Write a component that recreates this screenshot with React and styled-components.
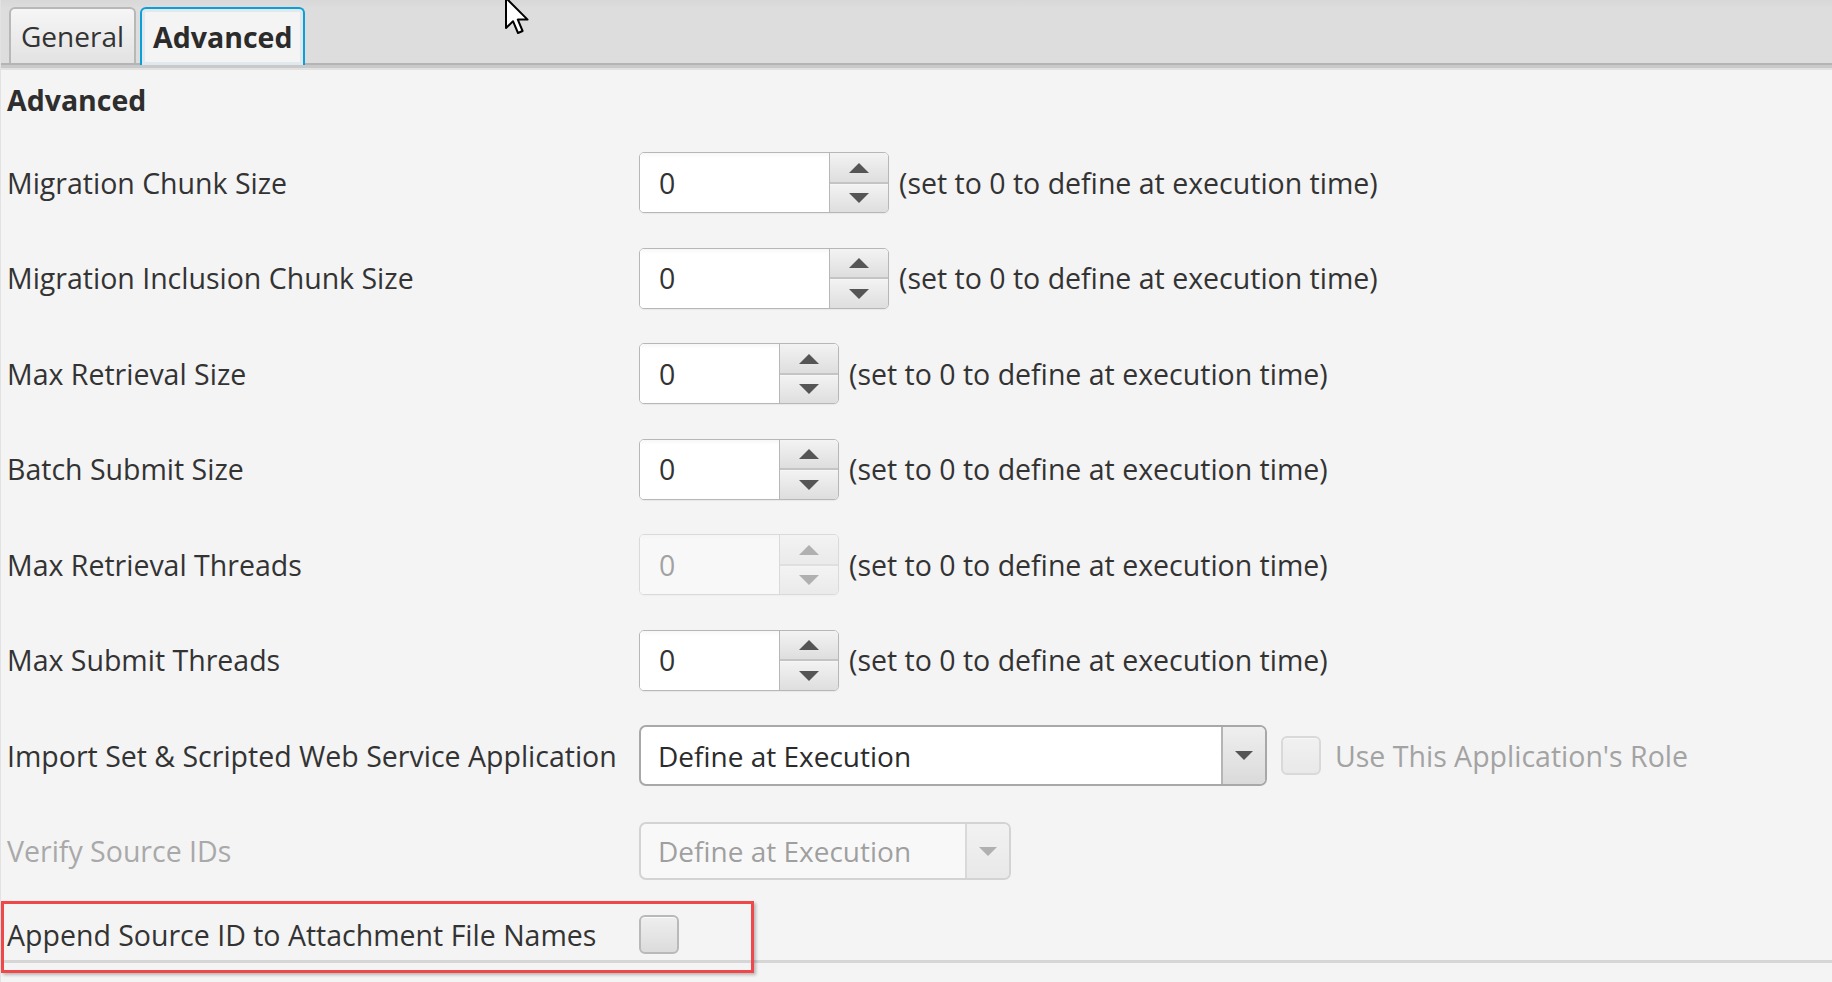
import styled, { createGlobalStyle, css } from "styled-components";

const GlobalStyle = createGlobalStyle`
  html, body {
    margin: 0;
    padding: 0;
    background: #f4f4f4;
  }
  body {
    font-family: "Open Sans", "Noto Sans", sans-serif;
    color: #333333;
    overflow: hidden;
  }
`;

const FONT = "28.5px";

const Window = styled.div`
  position: relative;
  width: 1832px;
  height: 982px;
  background: #f4f4f4;
  border-left: 1px solid #e2e2e2;
  box-sizing: border-box;
`;

const TabBar = styled.div`
  height: 65px;
  display: flex;
  align-items: flex-end;
  gap: 4px;
  padding-left: 8px;
  background: linear-gradient(#d8d8d8, #dddddd 8px);
  border-bottom: 2px solid #b4b4b4;
  box-shadow: 0 3px 0 #c9c9c9, 0 5px 0 #e2e2e2;
  box-sizing: border-box;
`;

const Tab = styled.div`
  box-sizing: border-box;
  height: ${(p) => (p.$selected ? "58px" : "56px")};
  margin-bottom: ${(p) => (p.$selected ? "-2px" : "0")};
  padding: 0 ${(p) => (p.$selected ? "11px" : "10px")};
  display: flex;
  align-items: center;
  font-size: ${(p) => (p.$selected ? FONT : "28px")};
  border-radius: 6px 6px 0 0;
  position: relative;
  z-index: 1;
  ${(p) =>
    p.$selected
      ? css`
          font-weight: 700;
          color: #2b2b2b;
          background: #f4f4f4;
          border: 2px solid #0a9fd6;
          border-bottom: none;
          box-shadow: inset 0 0 0 3px #dfe9ee;
        `
      : css`
          color: #333;
          background: linear-gradient(#f6f6f6, #e2e2e2);
          border: 2px solid #b8b8b8;
          border-bottom: none;
        `}
`;

const Pane = styled.div`
  padding-top: 4px;
`;

const Heading = styled.h3`
  margin: 0;
  padding-left: 6px;
  height: 66px;
  line-height: 62px;
  font-size: ${FONT};
  font-weight: 700;
  color: #2e2e2e;
`;

const Row = styled.div`
  position: relative;
  display: flex;
  align-items: center;
  height: 95.5px;
  padding-left: 6px;
  box-sizing: border-box;
`;

const LastRow = styled(Row)`
  height: 64px;
  padding-top: 10px;
  border-bottom: 3px solid #d6d6d6;

  &::after {
    content: "";
    position: absolute;
    left: 0;
    top: 2px;
    width: 753px;
    height: 72px;
    box-sizing: border-box;
    border: 3px solid #f0474a;
    box-shadow: 2px 2px 3px rgba(0, 0, 0, 0.25);
    pointer-events: none;
  }
`;

const Label = styled.span`
  width: 632px;
  flex: none;
  font-size: ${FONT};
  color: ${(p) => (p.$disabled ? "#a9a9a9" : "#333333")};
  white-space: nowrap;
`;

const Hint = styled.span`
  margin-left: 10px;
  font-size: ${FONT};
  color: #333333;
  white-space: nowrap;
`;

const SpinnerBox = styled.div`
  display: flex;
  height: 61px;
  border: 1px solid #b7b7b7;
  border-radius: 5px;
  overflow: hidden;
  box-sizing: border-box;
  background: #fff;
  box-shadow: 0 1px 1px rgba(0, 0, 0, 0.05);
  opacity: ${(p) => (p.$disabled ? 0.42 : 1)};
`;

const SpinnerField = styled.div`
  width: ${(p) => (p.$wide ? "189px" : "139px")};
  padding-left: 19px;
  box-sizing: border-box;
  display: flex;
  align-items: center;
  font-size: ${FONT};
  color: #333;
  background: linear-gradient(#f7f7f7, #ffffff 5px);
`;

const SpinnerButtons = styled.div`
  width: 58px;
  display: flex;
  flex-direction: column;
  border-left: 1px solid #b7b7b7;
`;

const StepButton = styled.div`
  flex: 1;
  display: flex;
  align-items: center;
  justify-content: center;
  background: linear-gradient(#f3f3f3, #dedede);
  & + & {
    border-top: 2px solid #c4c4c4;
    box-shadow: inset 0 1px 0 #f6f6f6;
  }
`;

const Arrow = styled.span`
  width: 0;
  height: 0;
  border-left: ${(p) => p.$size / 2}px solid transparent;
  border-right: ${(p) => p.$size / 2}px solid transparent;
  ${(p) =>
    p.$up
      ? `border-bottom: ${Math.round(p.$size / 2)}px solid #555;`
      : `border-top: ${Math.round(p.$size / 2)}px solid #555;`}
`;

const ComboBox = styled.div`
  display: flex;
  height: ${(p) => (p.$disabled ? "58px" : "61px")};
  width: ${(p) => p.$width}px;
  border: 2px solid #a8a8a8;
  border-radius: 7px;
  overflow: hidden;
  box-sizing: border-box;
  background: #fff;
  opacity: ${(p) => (p.$disabled ? 0.42 : 1)};
`;

const ComboValue = styled.div`
  flex: 1;
  display: flex;
  align-items: center;
  padding-left: 17px;
  font-size: 28px;
  color: #2b2b2b;
  white-space: nowrap;
`;

const ComboButton = styled.div`
  width: 42px;
  display: flex;
  align-items: center;
  justify-content: center;
  border-left: 2px solid #b5b5b5;
  background: linear-gradient(#efefef, #dadada);
`;

const Check = styled.div`
  width: 40px;
  height: 39px;
  flex: none;
  box-sizing: border-box;
  border: 2px solid #b9b9b9;
  border-radius: 6px;
  background: linear-gradient(#eeeeee, #dcdcdc);
  box-shadow: inset 0 1px 0 #fafafa;
  opacity: ${(p) => (p.$disabled ? 0.45 : 1)};
`;

const CheckLabel = styled.label`
  display: flex;
  align-items: center;
  gap: 14px;
  margin-left: 14px;
  font-size: ${FONT};
  color: ${(p) => (p.$disabled ? "#a3a3a3" : "#333")};
  white-space: nowrap;
`;

const Cursor = styled.svg`
  position: absolute;
  left: 503px;
  top: -4px;
  pointer-events: none;
`;

const HINT = "(set to 0 to define at execution time)";

const Spinner = ({ wide, disabled }) => (
  <SpinnerBox $disabled={disabled}>
    <SpinnerField $wide={wide}>0</SpinnerField>
    <SpinnerButtons>
      <StepButton>
        <Arrow $up $size={20} />
      </StepButton>
      <StepButton>
        <Arrow $size={20} />
      </StepButton>
    </SpinnerButtons>
  </SpinnerBox>
);

const Combo = ({ width, disabled, value }) => (
  <ComboBox $width={width} $disabled={disabled}>
    <ComboValue>{value}</ComboValue>
    <ComboButton>
      <Arrow $size={18} />
    </ComboButton>
  </ComboBox>
);

const spinnerRows = [
  { label: "Migration Chunk Size", wide: true },
  { label: "Migration Inclusion Chunk Size", wide: true },
  { label: "Max Retrieval Size" },
  { label: "Batch Submit Size" },
  { label: "Max Retrieval Threads", disabled: true },
  { label: "Max Submit Threads" },
];

const App = () => (
  <>
    <GlobalStyle />
    <Window>
      <TabBar>
        <Tab>General</Tab>
        <Tab $selected>Advanced</Tab>
      </TabBar>
      <Pane>
        <Heading>Advanced</Heading>
        {spinnerRows.map((r) => (
          <Row key={r.label}>
            <Label>{r.label}</Label>
            <Spinner wide={r.wide} disabled={r.disabled} />
            <Hint>{HINT}</Hint>
          </Row>
        ))}
        <Row>
          <Label>Import Set &amp; Scripted Web Service Application</Label>
          <Combo width={628} value="Define at Execution" />
          <CheckLabel $disabled>
            <Check $disabled />
            Use This Application's Role
          </CheckLabel>
        </Row>
        <Row>
          <Label $disabled>Verify Source IDs</Label>
          <Combo width={372} value="Define at Execution" disabled />
        </Row>
        <LastRow>
          <Label>Append Source ID to Attachment File Names</Label>
          <Check />
        </LastRow>
      </Pane>
      <Cursor width="30" height="40" viewBox="0 0 15 20">
        <path
          d="M1 1 L1 16 L4.5 12.6 L7 18.5 L9.3 17.5 L6.9 11.8 L11.8 11.8 Z"
          fill="#fff"
          stroke="#000"
          strokeWidth="1"
          strokeLinejoin="round"
        />
      </Cursor>
    </Window>
  </>
);

export default App;
